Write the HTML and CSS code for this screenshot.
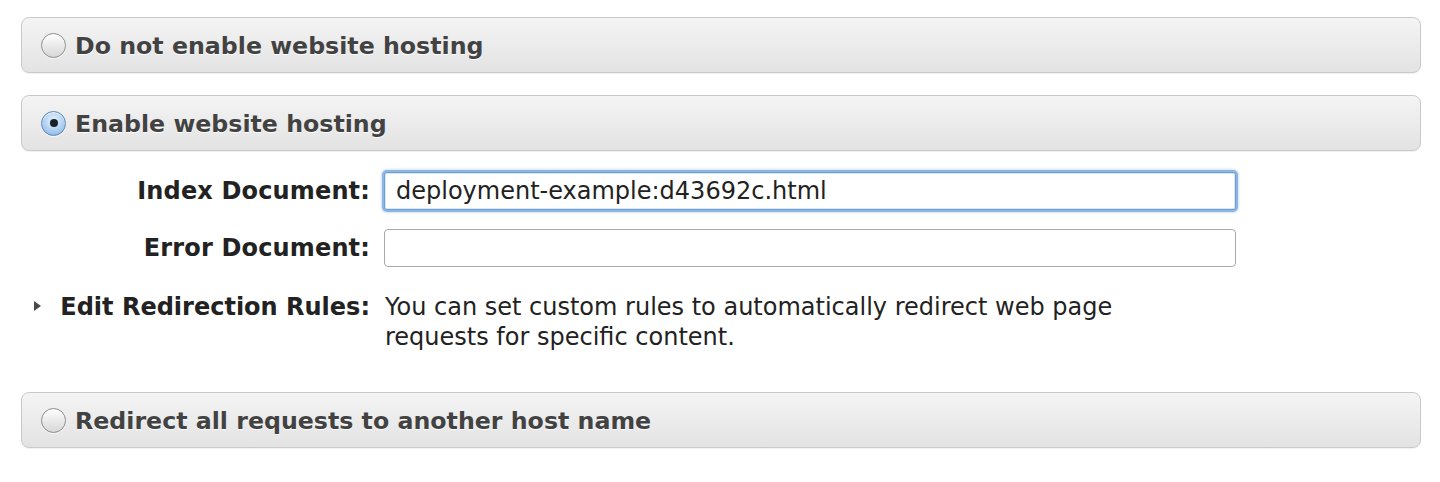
FILE: index.html
```html
<!DOCTYPE html>
<html>
<head>
<meta charset="utf-8">
<link rel="stylesheet" href="styles.css">
</head>
<body>
<div class="page">
  <div class="panel">
    <span class="radio"></span>
    <span class="panel-title">Do not enable website hosting</span>
  </div>
  <div class="panel panel-second">
    <span class="radio radio-checked"><span class="dot"></span></span>
    <span class="panel-title">Enable website hosting</span>
  </div>
  <div class="form">
    <label class="label">Index Document:</label>
    <div class="input input-focus">deployment-example:d43692c.html</div>
    <label class="label">Error Document:</label>
    <div class="input"></div>
    <div class="label label-top"><span class="tri"></span>Edit Redirection Rules:</div>
    <div class="desc">You can set custom rules to automatically redirect web page<br>requests for specific content.</div>
  </div>
  <div class="panel panel-third">
    <span class="radio"></span>
    <span class="panel-title">Redirect all requests to another host name</span>
  </div>
</div>
</body>
</html>
```

FILE: styles.css
```css
html, body {
  margin: 0;
  padding: 0;
  background: #ffffff;
}
body {
  font-family: "DejaVu Sans", Verdana, sans-serif;
  width: 1440px;
  height: 482px;
  overflow: hidden;
}
.page {
  padding: 17px 0 0 21px;
}
.panel {
  width: 1379px;
  height: 54px;
  border: 1px solid #c9c9c9;
  border-radius: 8px;
  background: linear-gradient(#f4f4f4, #e3e3e3);
  box-shadow: 0 1px 1px rgba(0,0,0,0.06);
  display: flex;
  align-items: center;
  padding-left: 19px;
  box-sizing: content-box;
}
.panel-second {
  margin-top: 22px;
}
.panel-third {
  margin-top: 40px;
}
.radio {
  width: 23px;
  height: 23px;
  border-radius: 50%;
  border: 1px solid #8d8d8d;
  background: linear-gradient(#ffffff, #e6e6e6 60%, #d8d8d8);
  box-shadow: inset 0 1px 1px rgba(255,255,255,0.9), 0 1px 0 rgba(255,255,255,0.7);
  display: flex;
  align-items: center;
  justify-content: center;
  flex: none;
}
.radio-checked {
  border-color: #5b86b6;
  background: radial-gradient(circle at 50% 35%, #e6f1fc 0%, #b9d6f3 45%, #7fb0e6 100%);
}
.dot {
  width: 8px;
  height: 8px;
  border-radius: 50%;
  background: #17202b;
}
.panel-title {
  margin-left: 9px;
  padding-top: 2px;
  font-size: 23.7px;
  font-weight: bold;
  color: #424242;
  text-shadow: 0 1px 0 #ffffff;
}
.form {
  display: grid;
  grid-template-columns: 349px 852px;
  column-gap: 14px;
  row-gap: 19px;
  align-items: center;
  margin-top: 21px;
}
.label {
  text-align: right;
  font-size: 24px;
  font-weight: bold;
  color: #222222;
  letter-spacing: 0.15px;
}
.label-top {
  align-self: start;
  margin-top: 6px;
  line-height: 30px;
  letter-spacing: 0;
}
.tri {
  display: inline-block;
  width: 0;
  height: 0;
  border-top: 5px solid transparent;
  border-bottom: 5px solid transparent;
  border-left: 7px solid #4a4a4a;
  margin-right: 19px;
  vertical-align: 4px;
}
.input {
  height: 36px;
  border: 1px solid #a9a9a9;
  border-radius: 4px;
  background: #ffffff;
  font-size: 24px;
  color: #222222;
  line-height: 36px;
  padding-left: 11px;
  box-sizing: content-box;
  width: 839px;
}
.input-focus {
  border-color: #6e9fd3;
  box-shadow: 0 0 0 2px #8cb5e3, 0 0 2px 3px rgba(150,190,235,0.45), inset 0 0 0 1px #d9e7f7;
  border-radius: 3px;
}
.desc {
  align-self: start;
  margin-top: 6px;
  font-size: 24px;
  line-height: 30px;
  color: #222222;
  margin-left: 1px;
}
```
